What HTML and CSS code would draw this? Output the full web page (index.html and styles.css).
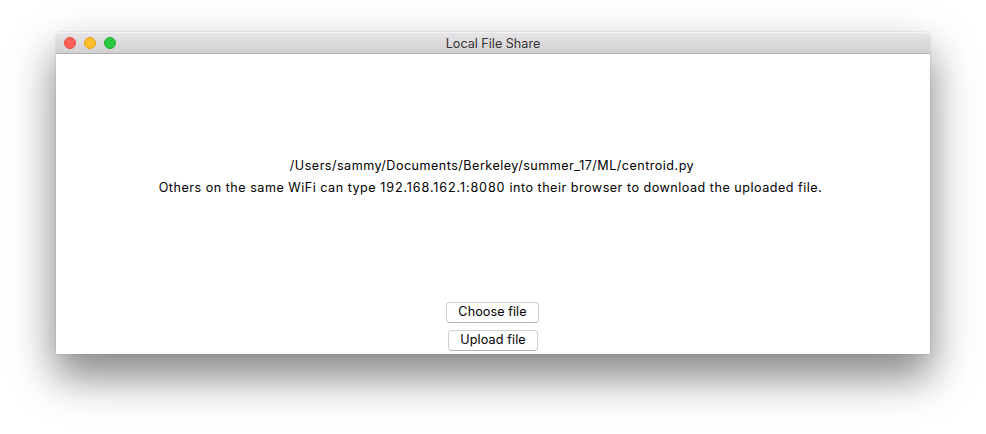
FILE: index.html
```html
<!DOCTYPE html>
<html lang="en">
<head>
<meta charset="utf-8">
<title>Local File Share</title>
<link rel="stylesheet" href="styles.css">
</head>
<body>
<main class="window">
  <header class="titlebar">
    <div class="controls"><span class="light close"></span><span class="light minimize"></span><span class="light zoom"></span></div>
    <h1 class="title">Local File Share</h1>
  </header>
  <section class="content">
    <p class="line path">/Users/sammy/Documents/Berkeley/summer_17/ML/centroid.py</p>
    <p class="line hint">Others on the same WiFi can type <span class="address">192.168.162.1:8080</span> into their browser to download the uploaded file.</p>
  </section>
  <footer class="actions">
    <button class="button choose">Choose file</button>
    <button class="button upload">Upload file</button>
  </footer>
</main>
</body>
</html>
```

FILE: styles.css
```css
* { box-sizing: border-box; }
body {
  margin: 0;
  height: 434px;
  overflow: hidden;
  padding: 32px 56px 80px;
  background: #fff;
  font-family: Inter, "Liberation Sans", sans-serif;
  color: #000;
}
.window {
  display: flex;
  flex-direction: column;
  height: 322px;
  background: #fff;
  border-radius: 5px 5px 0 0;
  box-shadow: 0 0 1px rgba(0,0,0,.45), 0 22px 36px rgba(0,0,0,.3), 0 20px 52px rgba(0,0,0,.25);
}
.titlebar {
  display: grid;
  grid-template-columns: 60px 1fr 60px;
  align-items: center;
  height: 22px;
  border-bottom: 1px solid #b1afb1;
  border-radius: 5px 5px 0 0;
  background: linear-gradient(#e8e6e8, #d2d0d2);
  box-shadow: inset 0 1px #f4f3f4;
}
.controls { display: flex; gap: 8px; padding-left: 8px; }
.light { width: 12px; height: 12px; border-radius: 50%; border: 1px solid; }
.close { background: #ff5f57; border-color: #e24b41; }
.minimize { background: #ffbd2e; border-color: #e1a116; }
.zoom { background: #29cc41; border-color: #1dad2b; }
.title {
  margin: 0;
  padding-top: 2px;
  font-size: 12.6px;
  line-height: 19px;
  font-weight: 400;
  text-align: center;
  color: #353335;
}
.content { display: flex; flex-direction: column; align-items: center; padding-top: 101px; }
.line { margin: 0; font-size: 12.6px; line-height: 22px; white-space: nowrap; }
.path { padding-right: 2px; letter-spacing: .475px; }
.hint { padding-right: 5px; letter-spacing: .5px; }
.address { letter-spacing: .87px; }
.actions { display: flex; flex-direction: column; align-items: center; gap: 7px; margin-top: auto; padding-bottom: 3px; }
.button {
  height: 21px;
  padding: 0 0 2px;
  border: 1px solid #cfcfcf;
  border-bottom-color: #b5b5b5;
  border-radius: 4px;
  background: #fff;
  color: #000;
  font: 12.6px/17px Inter, "Liberation Sans", sans-serif;
}
.choose { width: 93px; margin-right: 1px; letter-spacing: .08px; }
.upload { width: 90px; letter-spacing: .12px; }
```
